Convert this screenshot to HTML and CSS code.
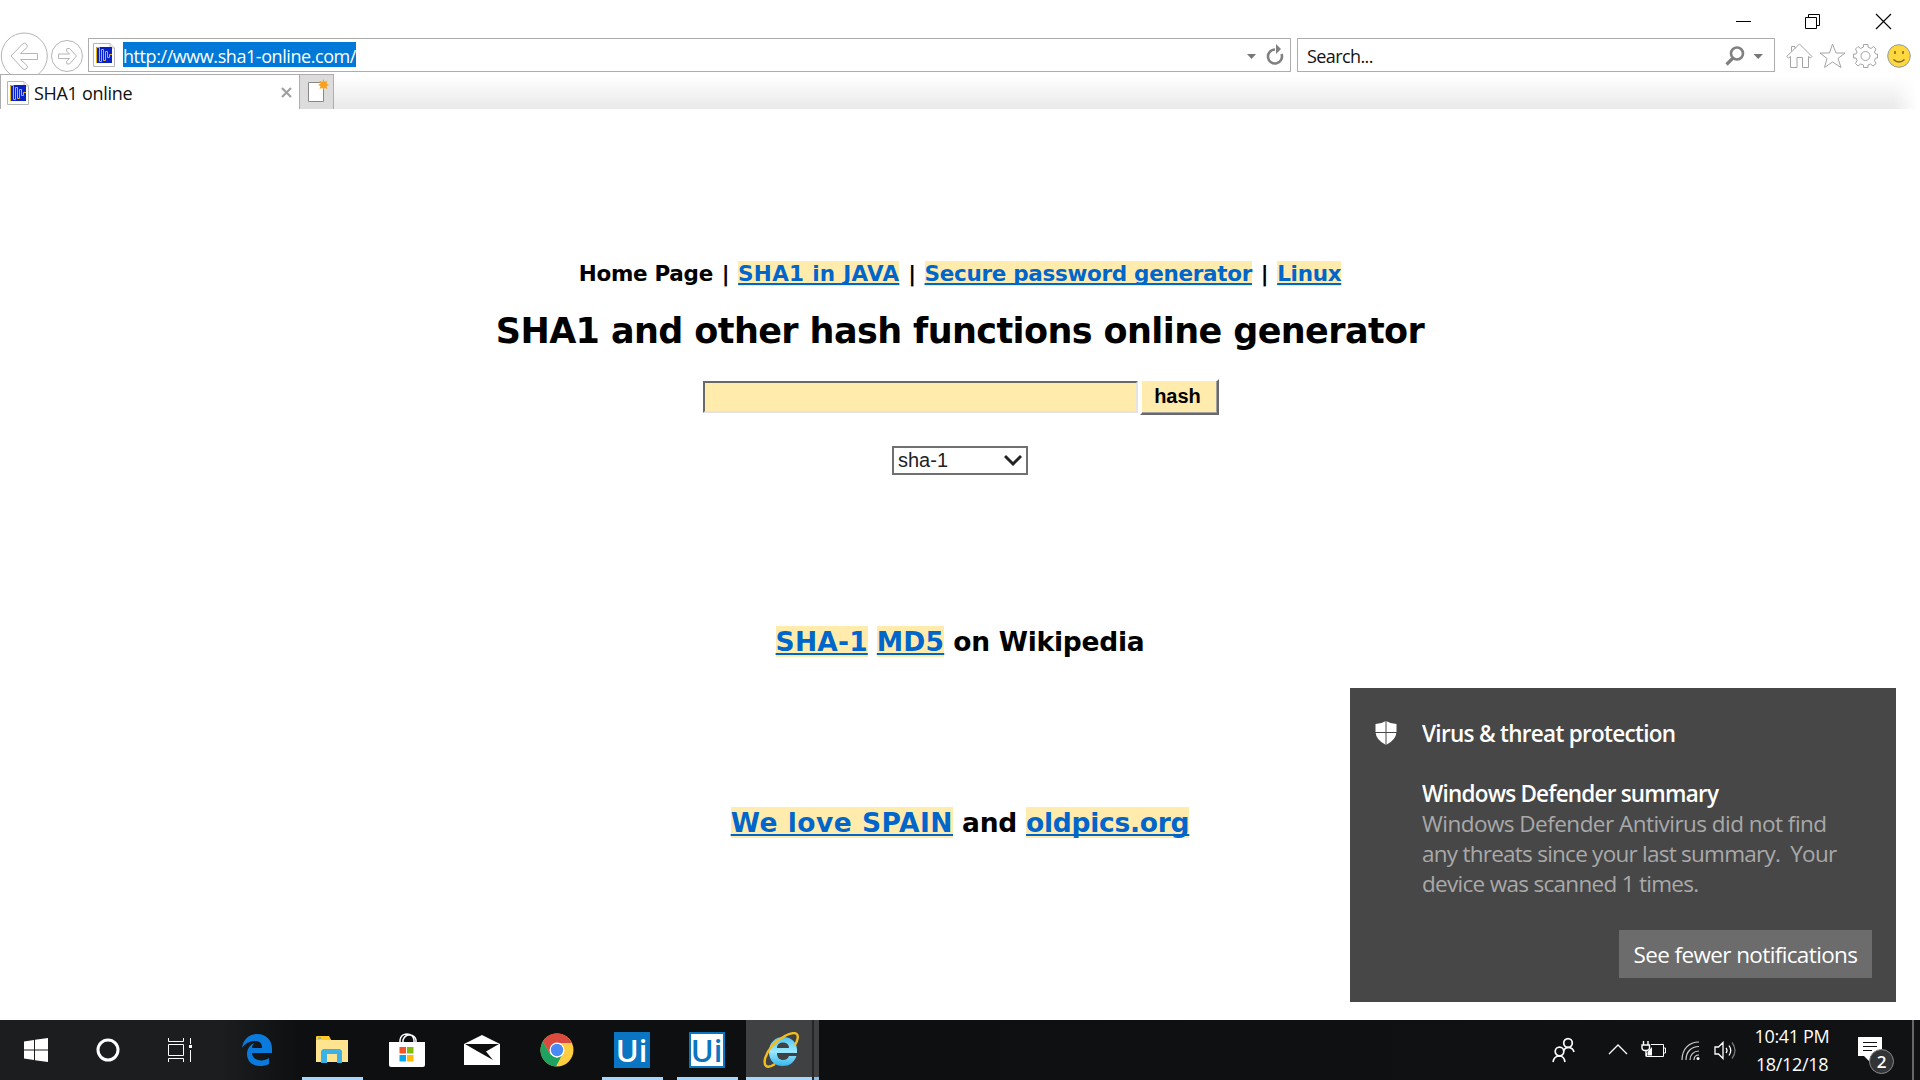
FILE: index.html
```html
<!DOCTYPE html>
<html lang="en">
<head>
<meta charset="utf-8">
<title>SHA1 online</title>
<link rel="stylesheet" href="styles.css">
</head>
<body>
<svg width="0" height="0" class="defs">
  <symbol id="favicon" viewBox="0 0 22 24">
    <path d="M.5.5H17L21.500 5V23.500H.500Z" fill="#fff" stroke="#b4b4b4"/>
    <path d="M17 .5V5h4.500" fill="#eee" stroke="#c4c4c4"/>
    <path d="M3 4H19V20H3Z" fill="#0a22c4"/>
    <path d="M3.500 20V4.500H6.500V18.500H8.500V6.500H10.500V17.500H12.500V8.500H14.500V14.500H16.500V11.500H19" fill="none" stroke="#e8b40c"/>
  </symbol>
</svg>
<header class="browser">
  <div class="titlebar">
    <svg class="minimize" width="17" height="17" viewBox="0 0 17 17"><path d="M1 8.500H16" stroke="#000"/></svg>
    <svg width="17" height="17" viewBox="0 0 17 17" fill="none" stroke="#000"><path d="M1.500 4.500H12.500V15.500H1.500ZM4.500 4.500V1.500H15.500V12.500H12.500"/></svg>
    <svg width="17" height="17" viewBox="0 0 17 17"><path d="M1 1L16 16M16 1L1 16" stroke="#000" stroke-width="1.100"/></svg>
  </div>
  <div class="toolbar">
    <svg class="navs" width="88" height="42" viewBox="0 0 88 42" fill="#fff" stroke="#b5b5b5">
      <circle cx="24.300" cy="24" r="23"/>
      <path d="M11 24L23 11.500Q24.500 10.500 26 12L27 13Q28 14.500 27 15.500L20.500 21.500H37.500V27.500H20.500L27 33.500Q28 35 27 36L26 37Q24.500 38 23 37Z"/>
      <circle cx="67" cy="24" r="15.500"/>
      <path d="M76.500 24L69.500 16.500H67L66.500 19L69.500 22H58.500V26.500H69.500L66.500 29.500L67 32H69.500Z"/>
    </svg>
    <div class="field address">
      <svg width="22" height="24"><use href="#favicon"/></svg>
      <span class="url">http://www.sha1-online.com/</span>
      <svg class="addr-tools" width="38" height="22" viewBox="0 0 38 22"><path d="M1 10H10L5.500 15Z" fill="#777"/><path d="M29 5.500A7 7 0 1 0 35.500 10" fill="none" stroke="#808080" stroke-width="2.600"/><path d="M30 0L35 5L30 10Z" fill="#808080"/></svg>
    </div>
    <div class="field search">
      <span>Search...</span>
      <svg width="38" height="22" viewBox="0 0 38 22"><circle cx="12" cy="8.500" r="6" fill="none" stroke="#808080" stroke-width="2.600"/><path d="M8 13L1.500 19.500" stroke="#808080" stroke-width="3.200"/><path d="M28.500 9H38L33.200 14Z" fill="#777"/></svg>
    </div>
    <svg class="tools" width="126" height="26" viewBox="0 0 126 26" fill="#fff" stroke="#a4a4a4">
      <path d="M.7 13.500L13.500 1L26 13.500L24.500 15L22.500 13.500V24.500H16.500V14.500H11V24.500H4.500V13.500L2.500 15ZM5.500 8.500V3.500H9V5.500"/>
      <path d="M46.500 1L50 10H59L52 15.500L55 24.500L46.500 19L38.500 24.500L41 15.500L34 10H43.500Z"/>
      <path d="M77.500 4V1.500H82V4L85 5.500L87.500 3.500L90 6L88.500 9L89.500 11H91.500V15H89.500L88.500 17.500L90 20.500L87 23L84.500 21L82 22V24.500H77.500V22L74.500 21L72 23L69.500 20.500L71 17.500L70 15H67.500V11H70L71 9L69.500 6L72 3.500L74.500 5.500Z"/>
      <circle cx="79.500" cy="13" r="4.500"/>
      <circle cx="113" cy="13" r="11.300" fill="#ffd83f" stroke="#8d9aa8"/>
      <path d="M109 8V11M117 8V11M107.500 16.500Q113 21.500 118.500 16.500" fill="none" stroke="#776730" stroke-width="1.500"/>
    </svg>
  </div>
  <div class="tabs">
    <div class="tab">
      <svg width="22" height="24"><use href="#favicon"/></svg>
      <span>SHA1 online</span>
      <svg class="close" width="11" height="11" viewBox="0 0 11 11"><path d="M1 1L10 10M10 1L1 10" stroke="#a0a0a0" stroke-width="2.200"/></svg>
    </div>
    <div class="newtab"><svg width="22" height="24" viewBox="0 0 22 24"><path d="M1.500 3.500H16.500V22.500H1.500Z" fill="#fff" stroke="#888"/><path d="M16.500 0L17.800 3L20.500 1.500L19.500 4.500L22 6L19.500 7L20.500 10L17.500 8.700L16.500 11.500L15.200 8.700L12.500 10L13.500 7L11 6L13.500 4.500L12.500 1.500L15.300 3Z" fill="#f9a11b"/></svg></div>
    <div class="strip"></div>
  </div>
</header>

<main class="page">
  <nav class="links">Home Page <i>|</i> <a class="java">SHA1 in JAVA</a> <i>|</i> <a class="secure">Secure password generator</a> <i>|</i> <a>Linux</a></nav>
  <h1>SHA1 and other hash functions online generator</h1>
  <div class="form"><div class="input"></div><div class="button">hash</div></div>
  <div class="select"><span>sha-1</span><svg width="18" height="13" viewBox="0 0 18 13"><path d="M1 2L9 10L17 2" fill="none" stroke="#222" stroke-width="3"/></svg></div>
  <p class="wiki"><a>SHA-1</a> <a>MD5</a> on Wikipedia</p>
  <p class="love"><a class="spain">We love SPAIN</a> and <a>oldpics.org</a></p>
</main>

<aside class="toast">
  <svg class="shield" width="24" height="26" viewBox="0 0 24 26"><path d="M12 1Q17 4 22.500 4V12Q22 20 12 25Q2 20 1.500 12V4Q7 4 12 1Z" fill="#fff"/><path d="M12 0V26M0 12.500H24" stroke="#474747"/></svg>
  <div class="toast-body">
    <div class="source">Virus &amp; threat protection</div>
    <div class="subject">Windows Defender summary</div>
    <div class="msg"><div class="m1">Windows Defender Antivirus did not find</div><div class="m2">any threats since your last summary.&nbsp; Your</div><div class="m3">device was scanned 1 times.</div></div>
    <div class="fewer"><span>See fewer notifications</span></div>
  </div>
</aside>

<footer class="taskbar">
  <div class="sys"><svg width="24" height="24" viewBox="0 0 24 24" fill="#fff"><path d="M0 3.400L10 2V11.500H0ZM11 1.800L24 0V11.500H11ZM0 12.500H10V22L0 20.600ZM11 12.500H24V24L11 22.200Z"/></svg></div>
  <div class="sys"><svg width="24" height="24" viewBox="0 0 24 24"><circle cx="12" cy="12" r="10" fill="none" stroke="#fff" stroke-width="3"/></svg></div>
  <div class="sys last"><svg width="24" height="24" viewBox="0 0 24 24" fill="none" stroke="#fff"><path d="M.5 0V3.500H15.500V0M.5 6.500H15.500V17.500H.5ZM.5 24V20.500H15.500V24M22.500 0V6M22.500 12V24"/><path d="M21 7H24V10H21Z" fill="#fff" stroke="none"/></svg></div>
  <div class="app"><svg width="32" height="32" viewBox="0 0 32 32"><path d="M1 14C2 6 8 0 16 0C26 0 31 7 31 15V19H11C11 24 16 26.500 20 26.500C23 26.500 26 25.500 28 24V30C25 31.500 22 32 19 32C11 32 6 27 6 20C6 15 9 11 13 9C11.500 11 11 12.500 11 14H21C21 9 19 7 14 7C8 7 3.500 10 1 14Z" fill="#0a7bdd"/></svg></div>
  <div class="app open"><svg width="32" height="28" viewBox="0 0 32 28"><path d="M0 1H13L15 4H32V26H0Z" fill="#ffe48f"/><path d="M0 1Q0 0 1 0H13L15 4H0Z" fill="#ffc928"/><path d="M2 2H5" stroke="#38a4dc"/><path d="M5 15L7 13H24L26 15V27H21V18H11V27H5Z" fill="#3bb1e5"/></svg></div>
  <div class="app"><svg width="36" height="34" viewBox="0 0 36 34"><path d="M11 10V7Q12 1 18 1Q24 1 25 7V10M14 10V7Q16 2 20 2Q26 2 27 7V10" fill="none" stroke="#fff" stroke-width="1.500"/><path d="M0 9H36V32Q36 34 34 34H2Q0 34 0 32Z" fill="#fff"/><path d="M10.500 14H17V20.500H10.500Z" fill="#f35325"/><path d="M18 14H24.500V20.500H18Z" fill="#81bc06"/><path d="M10.500 22H17V28.500H10.500Z" fill="#05a6f0"/><path d="M18 22H24.500V28.500H18Z" fill="#ffba08"/></svg></div>
  <div class="app"><svg width="36" height="30" viewBox="0 0 36 30"><path d="M0 9L18 0L36 9V30H0Z" fill="#fff"/><path d="M1 9H35L22 16.500L29 25L13 16Z" fill="#0d0f10"/></svg></div>
  <div class="app"><svg width="34" height="34" viewBox="0 0 34 34"><circle cx="17" cy="17" r="16.500" fill="#ffcd40"/><path d="M2.800 8.500A16.500 16.500 0 0 1 31.800 10H17L10 21Z" fill="#db4a3e"/><path d="M2.800 8.500L10 21L17 25L22 22L16 33.500A16.500 16.500 0 0 1 2.800 8.500Z" fill="#1da261"/><circle cx="17" cy="17" r="7.500" fill="#fff"/><circle cx="17" cy="17" r="6.200" fill="#4a8af4"/></svg></div>
  <div class="app open"><span class="ui">Ui</span></div>
  <div class="app open"><span class="ui light">Ui</span></div>
  <div class="app active"><svg width="36" height="36" viewBox="0 0 36 36"><defs><linearGradient id="ie" x1="0" y1="0" x2="0" y2="1"><stop offset="0" stop-color="#4fc5f5"/><stop offset=".5" stop-color="#9be8fd"/><stop offset="1" stop-color="#36b6ee"/></linearGradient></defs><path d="M34 21H14C14 26 17 28 20 28C23 28 25 26.500 26 24H33.500C31 31 26 34 20 34C11 34 6 28 6 20C6 11 12 5 20 5C29 5 35 11 34 21ZM14 16H26C26 12 23 10.500 20 10.500C17 10.500 14 12 14 16Z" fill="url(#ie)"/><path d="M32 13C35 8 36 3 33 1.500C28-.5 16 6 9 14C2 22 0 31 3 34C5 35.500 9 34 12 32" fill="none" stroke="#f3bd20" stroke-width="2.400"/></svg></div>
  <div class="stack"></div>
  <div class="tray">
    <svg class="people" width="24" height="26" viewBox="0 0 24 26" fill="none" stroke="#fff" stroke-width="1.700"><circle cx="16" cy="6" r="4.300"/><circle cx="7.500" cy="14.500" r="4.300"/><path d="M11.500 14Q13 10.500 16 10.500Q21 10.500 22 15M1 25Q2 19 7.500 19Q12 19 13 25"/></svg>
    <svg class="chev" width="20" height="12" viewBox="0 0 20 12"><path d="M1 11L10 2L19 11" fill="none" stroke="#fff" stroke-width="1.300"/></svg>
    <svg class="battery" width="25" height="19" viewBox="0 0 25 19" fill="none" stroke="#fff"><path d="M10 3.500H22.500V15.500H5.500V12M22.500 7H24.500V12H22.500"/><path d="M2.500 0V4M7 0V4M1 4H8.500V7Q8.500 9 6 9.500H3.500Q1 9 1 7ZM5 10V15.500" stroke-width="1.400"/><path d="M6.500 14.500V11L11 6V14.500Z" fill="#fff" stroke="none"/></svg>
    <svg class="wifi" width="20" height="20" viewBox="0 0 20 20" fill="none" stroke="#fff" stroke-width="1.200"><path d="M1 19C1 8 8 1 18 1M5 19C5 11 10 5.500 18 5.500M9 19C9 14 12.500 10 18 10M13 19C13 16 15 14 18 14" opacity=".8"/><circle cx="17" cy="17.500" r="1.500" fill="#fff" stroke="none"/></svg>
    <svg class="volume" width="23" height="19" viewBox="0 0 23 19" fill="none" stroke="#fff" stroke-width="1.300"><path d="M1 6H4.500L9 1.500V17.500L4.500 13H1ZM12 7Q14 9.500 12 12M15 4.500Q18.500 9.500 15 14.500"/><path d="M18 1.500Q24 9.500 18 17.500" stroke="#777"/></svg>
    <div class="clock"><span class="time">10:41 PM</span><span class="date">18/12/18</span></div>
    <div class="action"><svg width="24" height="25" viewBox="0 0 24 25"><path d="M0 0H24V19H12V25L6 19H0Z" fill="#fff"/><path d="M5 5.500H19M5 9.500H19M5 13.500H14" stroke="#111"/></svg><span class="badge">2</span></div>
    <div class="desktop"></div>
  </div>
</footer>
</body>
</html>
```
FILE: styles.css
```css
* { box-sizing: border-box; }
body { margin: 0; width: 1920px; height: 1080px; display: flex; flex-direction: column; background: #fff; overflow: hidden; position: relative; font-family: "Open Sans", "Noto Sans", sans-serif; color: #111; }
svg { display: block; flex: none; }
.defs { position: absolute; }

.browser { height: 109px; display: flex; flex-direction: column; }
.titlebar { height: 32px; display: flex; justify-content: flex-end; gap: 54px; padding: 13px 28px 0 0; }
.minimize { margin-right: -2px; }
.toolbar { height: 42px; display: flex; overflow: hidden; }
.field { height: 34px; margin-top: 6px; border: 1px solid #adadad; display: flex; align-items: center; font-size: 18px; }
.address { width: 1203px; padding-left: 4px; }
.url { height: 25px; margin: 0 0 1px 8px; line-height: 28px; background: #0078d7; color: #fff; width: 233px; letter-spacing: -0.43px; white-space: nowrap; }
.addr-tools { margin: 0 6px 0 auto; }
.search { width: 478px; margin-left: 6px; padding: 1px 11px 0 9px; justify-content: space-between; letter-spacing: -0.6px; }
.tools { margin: 11px 0 0 11px; }
.tabs { height: 35px; display: flex; }
.tab { width: 299px; border: 1px solid #adadad; border-bottom: 0; border-right: 0; display: flex; align-items: center; padding: 1px 7px 0 6px; font-size: 18px; letter-spacing: -0.3px; }
.tab span { margin: 1px 0 0 5px; }
.close { margin-left: auto; }
.newtab { width: 35px; border: 1px solid #adadad; border-bottom: 0; background: #dcdcdc; padding: 4px 0 0 7px; }
.strip { width: 1583px; background: linear-gradient(90deg, transparent 98.5%, #fff), linear-gradient(#fff 8%, #ebebeb 90%); }

.page { height: 911px; padding-top: 151px; display: flex; flex-direction: column; align-items: center; font: bold 21.5px "DejaVu Sans", sans-serif; color: #000; white-space: nowrap; }
.page a { color: #06c; background: #ffebac; text-decoration: underline; text-decoration-thickness: 2px; text-underline-offset: 2px; text-decoration-skip-ink: none; }
.page i { font-style: normal; margin: 0 1.6px; }
.links { line-height: 27px; letter-spacing: -0.3px; }
.page .java { letter-spacing: 0.3px; }
h1 { margin: 24px 0 0; font-size: 35px; line-height: 41px; letter-spacing: -0.6px; }
.form { margin: 27px 0 0 2px; height: 36px; display: flex; align-items: flex-start; gap: 2px; }
.input { width: 435px; height: 32px; margin-top: 2px; background: #ffebac; border: 2px solid; border-color: #696969 #e3e3e3 #e3e3e3 #696969; }
.button { width: 79px; height: 36px; background: #ffebac; border: 2px solid; border-color: #fff #696969 #696969 #fff; text-align: center; font: bold 20px/31px "Liberation Sans", sans-serif; box-shadow: inset -1px -1px #a0a0a0; padding-right: 4px; }
.select { width: 136px; height: 29px; margin-top: 31px; border: 2px solid #707070; display: flex; align-items: center; justify-content: space-between; padding: 0 4px; font: 20px "Liberation Sans", sans-serif; color: #222; }
.page p { margin: 0; font-size: 26.5px; line-height: 31px; letter-spacing: -0.25px; }
.page .wiki { margin-top: 151px; }
.wiki a { letter-spacing: 0.2px; }
.page .love { margin-top: 150px; }
.page .spain { letter-spacing: 0.5px; }

.toast { position: absolute; left: 1350px; top: 688px; width: 546px; height: 314px; background: #474747; color: #fff; display: flex; padding: 32px 24px 0 24px; font-size: 22.5px; line-height: 30px; white-space: nowrap; }
.toast-body { flex: 1; display: flex; flex-direction: column; margin-left: 24px; }
.source { font-weight: 600; letter-spacing: -0.7px; line-height: 28px; }
.subject { margin-top: 31px; font-weight: 600; letter-spacing: -0.79px; }
.msg { color: #a9a9a9; letter-spacing: -0.53px; }
.m2 { letter-spacing: -0.75px; }
.m3 { letter-spacing: -0.7px; }
.fewer { width: 253px; height: 48px; padding-top: 1px; margin-top: 31px; align-self: flex-end; background: #6c6c6c; display: flex; align-items: center; justify-content: center; letter-spacing: -0.62px; }

.taskbar { height: 60px; display: flex; background: linear-gradient(90deg, #1b1d1f 0, #1b1d1f 220px, #0d0f10 300px, #0d0f10 900px, #101213 100%); color: #fff; }
.sys { width: 72px; display: flex; align-items: center; justify-content: center; }
.last { margin-right: 3px; }
.app { width: 75px; display: flex; align-items: center; justify-content: center; }
.open { background: linear-gradient(#a6d6fc, #a6d6fc) 8px 57px / 61px 3px no-repeat; }
.active { width: 66px; margin-left: 2px; padding-left: 4px; background: linear-gradient(transparent 57px, #a6d6fc 57px), #404142; }
.stack { width: 7px; border-left: 2px solid #252627; background: linear-gradient(#404142 57px, #8dbbe0 57px); }
.ui { width: 36px; height: 36px; background: #0a75c2; border: 2px solid #0a75c2; color: #fff; font: 600 31px/32px "Open Sans", sans-serif; text-align: center; }
.light { background: #fff; color: #0a75c2; }
.tray { margin-left: auto; display: flex; align-items: center; }
.chev { margin: 0 0 2px 32px; }
.battery { margin-left: 13px; }
.wifi { margin: 2px 0 0 15px; }
.volume { margin-left: 13px; }
.clock { width: 84px; margin: 0 1px 0 13px; display: flex; flex-direction: column; align-items: center; font-size: 18px; line-height: 28px; letter-spacing: -0.35px; }
.action { position: relative; width: 36px; height: 36px; margin: 0 18px 0 23px; padding-top: 5px; }
.badge { position: absolute; left: 11px; top: 17px; width: 25px; height: 25px; border: 1px solid #888; border-radius: 50%; background: #333435; font: 600 17px/23px "Open Sans", sans-serif; text-align: center; }
.desktop { width: 8px; height: 60px; border-left: 2px solid #666; }
```
